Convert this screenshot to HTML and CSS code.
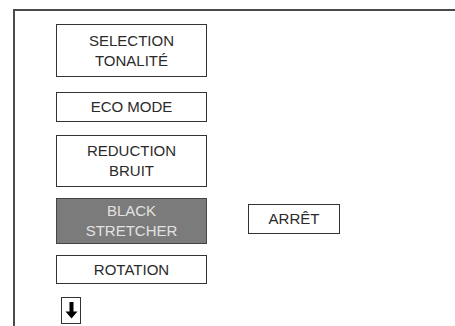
FILE: index.html
```html
<!DOCTYPE html>
<html lang="fr">
<head>
<meta charset="utf-8">
<title>Menu</title>
<link rel="stylesheet" href="styles.css">
</head>
<body>
<div class="frame">
  <div class="menu">
    <div class="btn tall first">SELECTION<br>TONALITÉ</div>
    <div class="btn short eco">ECO MODE</div>
    <div class="btn tall reduc">REDUCTION<br>BRUIT</div>
    <div class="row">
      <div class="btn active">BLACK<br>STRETCHER</div>
      <div class="btn value">ARRÊT</div>
    </div>
    <div class="btn short rot">ROTATION</div>
    <div class="arrow">
      <svg width="13" height="17" viewBox="0 0 13 17"><path d="M4.5 0h4v9.5h4L6.5 16.5 0.5 9.5h4z" fill="#000"/></svg>
    </div>
  </div>
</div>
</body>
</html>
```
FILE: styles.css
```css
html, body {
  margin: 0;
  padding: 0;
  background: #fff;
  overflow: hidden;
  height: 326px;
}
body {
  font-family: "Liberation Sans", Arial, sans-serif;
  font-size: 15px;
  color: #2a2a2a;
}
.frame {
  margin: 9px 0 0 13px;
  border-top: 2px solid #4a4a4a;
  border-left: 2px solid #4a4a4a;
  padding: 13px 0 0 41px;
  height: 302px;
  box-sizing: border-box;
  height: 317px;
}
.menu {
  display: flex;
  flex-direction: column;
  align-items: flex-start;
}
.btn {
  box-sizing: border-box;
  width: 151px;
  border: 1px solid #333;
  text-align: center;
  line-height: 20px;
  display: flex;
  align-items: center;
  justify-content: center;
}
.tall { height: 53px; }
.short { height: 30px; }
.eco { margin-top: 15px; }
.reduc { margin-top: 13px; height: 52px; }
.row {
  margin-top: 11px;
  display: flex;
  align-items: center;
  gap: 41px;
}
.active {
  height: 46px;
  background: #7b7b7b;
  color: #e2e2e2;
  border-color: #444;
}
.value {
  width: 92px;
  height: 30px;
  margin-top: -4px;
}
.rot { margin-top: 11px; height: 29px; }
.arrow {
  margin: 13px 0 0 5px;
  box-sizing: border-box;
  width: 20px;
  height: 27px;
  border: 1px solid #333;
  display: flex;
  align-items: center;
  justify-content: center;
}
.arrow svg { display: block; }
```
